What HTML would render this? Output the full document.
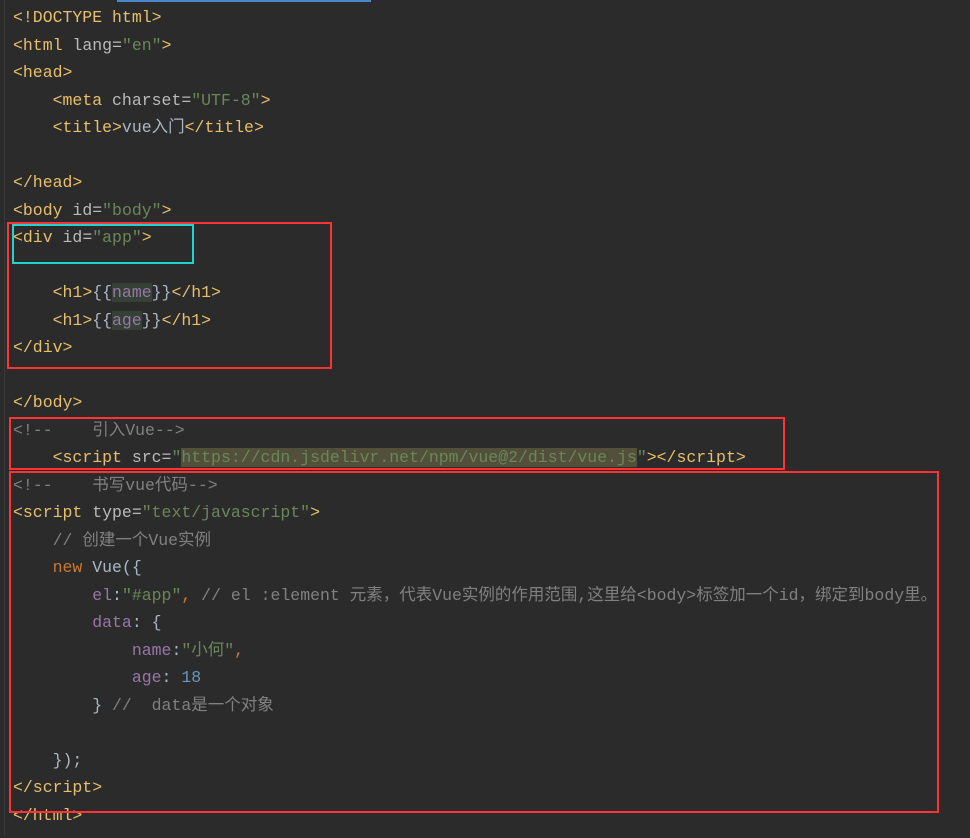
<!DOCTYPE html>
<html><head><meta charset="utf-8"><style>
body{margin:0;width:970px;height:836px;background:#2b2b2b;overflow:hidden;position:relative;font-family:"Liberation Mono","Noto Sans CJK SC",monospace;font-size:16.5px}
.w{position:absolute;left:0;top:2px;width:970px;height:836px}
.l{position:absolute;left:13px;height:27px;line-height:27px;white-space:pre;color:#a9b7c6}
.t{color:#e8bf6a}.a{color:#bababa}.v{color:#6a8759}.c{color:#808080}.k{color:#cc7832}.p{color:#9876aa}.n{color:#6897bb}
.hl{background:#344134}.u{background:#52503a}
.box{position:absolute;border:2px solid #f33;box-sizing:border-box}
.gut{position:absolute;left:4px;top:0;width:1px;height:836px;background:#3a3a3a}
</style></head><body>
<div class="gut"></div>
<div style="position:absolute;left:117px;top:0;width:254px;height:2px;background:#4a88c7"></div>
<div class="w">
<div class="l" style="top:2px"><span class="t">&lt;!DOCTYPE html&gt;</span></div>
<div class="l" style="top:30px"><span class="t">&lt;html </span><span class="a">lang=</span><span class="v">"en"</span><span class="t">&gt;</span></div>
<div class="l" style="top:57px"><span class="t">&lt;head&gt;</span></div>
<div class="l" style="top:85px">    <span class="t">&lt;meta </span><span class="a">charset=</span><span class="v">"UTF-8"</span><span class="t">&gt;</span></div>
<div class="l" style="top:112px">    <span class="t">&lt;title&gt;</span>vue入门<span class="t">&lt;/title&gt;</span></div>
<div class="l" style="top:167px"><span class="t">&lt;/head&gt;</span></div>
<div class="l" style="top:195px"><span class="t">&lt;body </span><span class="a">id=</span><span class="v">"body"</span><span class="t">&gt;</span></div>
<div class="l" style="top:222px"><span class="t">&lt;div </span><span class="a">id=</span><span class="v">"app"</span><span class="t">&gt;</span></div>
<div class="l" style="top:277px">    <span class="t">&lt;h1&gt;</span>{{<span class="p hl">name</span>}}<span class="t">&lt;/h1&gt;</span></div>
<div class="l" style="top:305px">    <span class="t">&lt;h1&gt;</span>{{<span class="p hl">age</span>}}<span class="t">&lt;/h1&gt;</span></div>
<div class="l" style="top:332px"><span class="t">&lt;/div&gt;</span></div>
<div class="l" style="top:387px"><span class="t">&lt;/body&gt;</span></div>
<div class="l" style="top:415px"><span class="c">&lt;!--    引入Vue--&gt;</span></div>
<div class="l" style="top:442px">    <span class="t">&lt;script </span><span class="a">src=</span><span class="v">"<span class="u">https://cdn.jsdelivr.net/npm/vue@2/dist/vue.js</span>"</span><span class="t">&gt;&lt;/script&gt;</span></div>
<div class="l" style="top:470px"><span class="c">&lt;!--    书写vue代码--&gt;</span></div>
<div class="l" style="top:497px"><span class="t">&lt;script </span><span class="a">type=</span><span class="v">"text/javascript"</span><span class="t">&gt;</span></div>
<div class="l" style="top:525px">    <span class="c">// 创建一个Vue实例</span></div>
<div class="l" style="top:552px">    <span class="k">new </span>Vue({</div>
<div class="l" style="top:580px">        <span class="p">el</span>:<span class="v">"#app"</span><span class="k">, </span><span class="c">// el :element 元素，代表Vue实例的作用范围,这里给&lt;body&gt;标签加一个id，绑定到body里。</span></div>
<div class="l" style="top:607px">        <span class="p">data</span>: {</div>
<div class="l" style="top:635px">            <span class="p">name</span>:<span class="v">"小何"</span><span class="k">,</span></div>
<div class="l" style="top:662px">            <span class="p">age</span>: <span class="n">18</span></div>
<div class="l" style="top:690px">        } <span class="c">//  data是一个对象</span></div>
<div class="l" style="top:745px">    });</div>
<div class="l" style="top:772px"><span class="t">&lt;/script&gt;</span></div>
<div class="l" style="top:800px"><span class="t">&lt;/html&gt;</span></div>
</div>
<div class="box" style="left:7px;top:222px;width:325px;height:147px"></div>
<div class="box" style="left:12px;top:224px;width:182px;height:40px;border-color:#1fd3d3"></div>
<div class="box" style="left:9px;top:417px;width:776px;height:53px"></div>
<div class="box" style="left:9px;top:471px;width:930px;height:342px"></div>
</body></html>
